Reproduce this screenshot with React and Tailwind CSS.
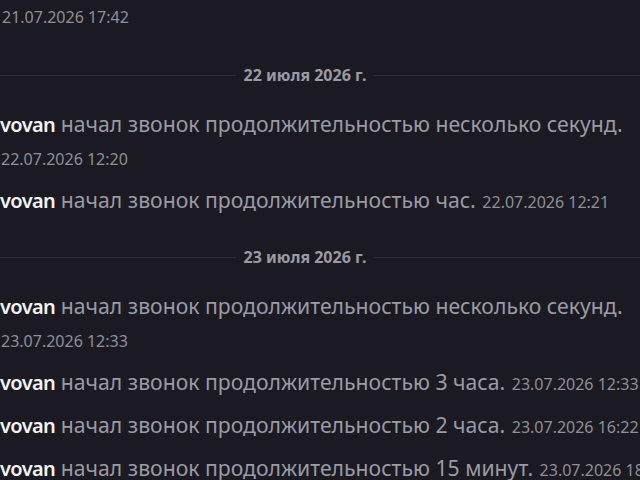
import React from 'react';

const calls = [
  { day: '22 июля 2026 г.', items: [
    { user: 'vovan', text: 'начал звонок продолжительностью несколько секунд.', at: '22.07.2026 12:20' },
    { user: 'vovan', text: 'начал звонок продолжительностью час.', at: '22.07.2026 12:21' },
  ] },
  { day: '23 июля 2026 г.', items: [
    { user: 'vovan', text: 'начал звонок продолжительностью несколько секунд.', at: '23.07.2026 12:33' },
    { user: 'vovan', text: 'начал звонок продолжительностью 3 часа.', at: '23.07.2026 12:33' },
    { user: 'vovan', text: 'начал звонок продолжительностью 2 часа.', at: '23.07.2026 16:22' },
    { user: 'vovan', text: 'начал звонок продолжительностью 15 минут.', at: '23.07.2026 18:47' },
  ] },
];

function DayDivider({ label }) {
  return (
    <div className="flex items-center mr-[50px] mt-[26px] mb-[17px] h-5">
      <div className="flex-1 h-px bg-[#2c2c35]" />
      <span className="px-2 text-[16px] leading-none font-bold text-[#9a9aa3]">{label}</span>
      <div className="flex-1 h-px bg-[#2c2c35]" />
    </div>
  );
}

function CallRow({ user, text, at }) {
  return (
    <div className="pl-[30px] py-[5px] leading-[33px] text-[21.2px] text-[#9a9ba5]">
      <span className="font-semibold text-[20px] leading-none tracking-[-0.6px] text-[#f2f3f5]">{user}</span> {text}{' '}
      <span className="whitespace-nowrap text-[16px] leading-none ml-px text-[#8e8f99]">{at}</span>
    </div>
  );
}

export default function App() {
  return (
    <div
      className="w-[640px] h-[480px] overflow-hidden bg-[#1b1a22]"
      style={{ fontFamily: '"Noto Sans", "Open Sans", sans-serif' }}
    >
      <div className="w-[720px] -ml-[30px] flex flex-col">
        <div className="pl-[32px] pb-[5px] pt-px leading-[33px] text-[16px] text-[#8e8f99]">
          21.07.2026 17:42
        </div>
        {calls.map((group) => (
          <React.Fragment key={group.day}>
            <DayDivider label={group.day} />
            {group.items.map((c, i) => (
              <CallRow key={i} {...c} />
            ))}
          </React.Fragment>
        ))}
      </div>
    </div>
  );
}
